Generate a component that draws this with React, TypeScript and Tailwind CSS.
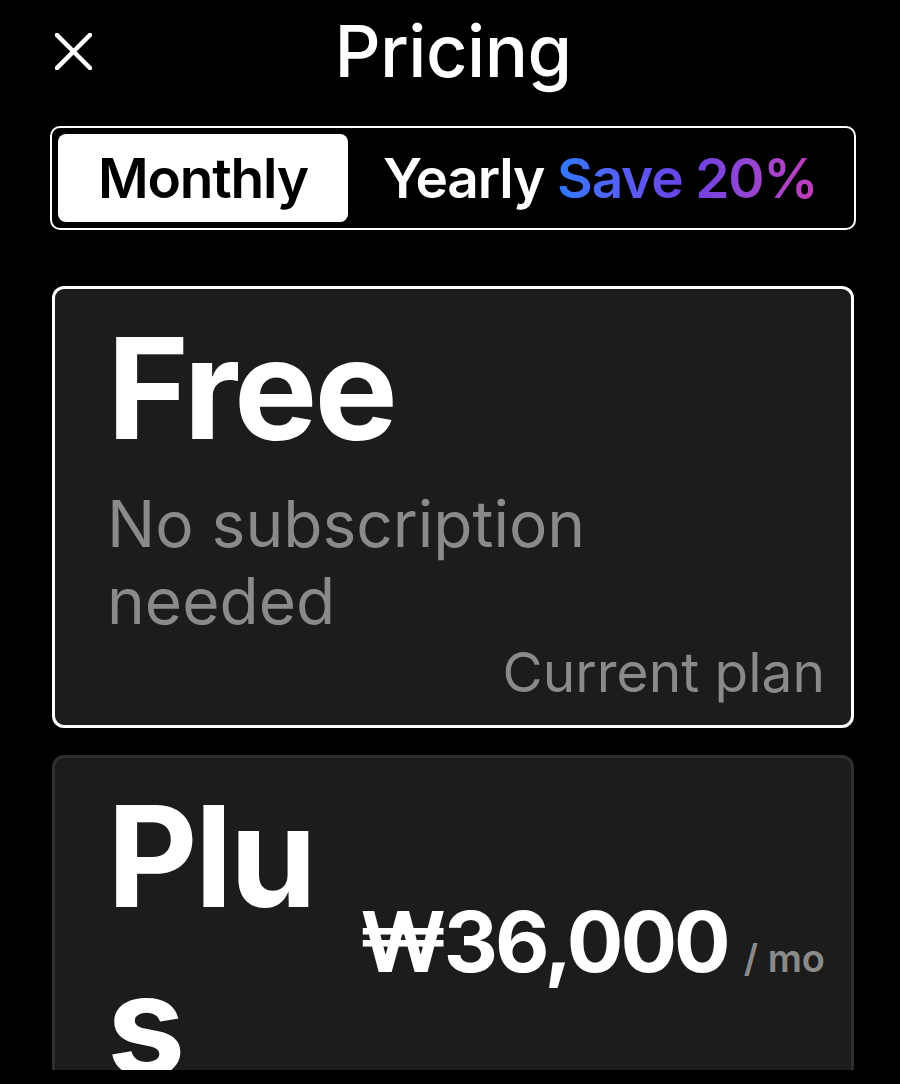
import type { ReactNode } from 'react'

interface PlanCardProps {
  active?: boolean
  children: ReactNode
}

function PlanCard({ active, children }: PlanCardProps) {
  return (
    <div
      className={
        active
          ? 'mx-[2px] rounded-[12px] border-[3px] border-white bg-[#1c1c1c] pl-[52px] pr-[26px] pt-[15px] pb-[22px]'
          : 'mx-[2px] rounded-[12px] border-[3px] border-[#2e2e2e] bg-[#1c1c1c] pl-[52px] pr-[26px] pt-[14px] pb-[17px]'
      }
    >
      {children}
    </div>
  )
}

export default function App() {
  return (
    <div className="h-[1084px] overflow-hidden bg-black font-['Inter','Liberation_Sans',sans-serif] text-white">
      <div className="h-[1070px] overflow-hidden pl-[50px] pr-[44px]">
        {/* Header */}
        <div className="grid grid-cols-[1fr_auto_1fr] items-center pt-[8px]">
          <button className="ml-[5px] flex h-[40px] w-[40px] items-center justify-start">
            <svg width="37" height="37" viewBox="0 0 37 37" fill="none">
              <path d="M2 2 L35 35 M35 2 L2 35" stroke="white" strokeWidth="4.5" strokeLinecap="square" />
            </svg>
          </button>
          <h1 className="text-[72px] font-medium leading-[86px] tracking-[-0.5px]">Pricing</h1>
          <div />
        </div>

        {/* Billing toggle */}
        <div className="mt-[32px] flex items-center whitespace-nowrap rounded-[10px] border-2 border-white p-[6px]">
          <div className="rounded-[8px] bg-white px-[40px] py-[10px] text-[55px] font-semibold leading-[68px] tracking-[-1.2px] text-black">
            Monthly
          </div>
          <div className="flex items-center gap-[13px] pl-[35px] text-[55px] font-semibold leading-[68px] tracking-[-1.2px]">
            <span>Yearly</span>
            <span className="bg-linear-to-r from-[#2a78ff] via-[#6a40e6] to-[#c03cb8] bg-clip-text text-transparent">
              Save 20%
            </span>
          </div>
        </div>

        {/* Free */}
        <div className="mt-[56px]">
          <PlanCard active>
            <p className="text-[140px] font-bold leading-[168px] tracking-[-3px]">Free</p>
            <p className="mt-[13px] max-w-[520px] text-[64px] leading-[77px] text-[#8a8a8a]">
              No subscription needed
            </p>
            <p className="mt-[2px] text-right text-[55px] leading-[62px] text-[#8a8a8a]">Current plan</p>
          </PlanCard>
        </div>

        {/* Plus */}
        <div className="mt-[27px]">
          <PlanCard>
            <div className="flex items-start">
              <p className="w-[250px] break-all text-[140px] font-bold leading-[168px] tracking-[-3px]">Plus</p>
              <div className="ml-auto mt-[120px] flex items-baseline whitespace-nowrap">
                <span className="text-[84px] font-bold leading-[100px] tracking-[-3px]">₩36,000</span>
                <span className="ml-[16px] text-[38px] font-semibold text-[#8a8a8a]">/ mo</span>
              </div>
            </div>
            <div className="h-[200px]" />
          </PlanCard>
        </div>
      </div>
    </div>
  )
}
